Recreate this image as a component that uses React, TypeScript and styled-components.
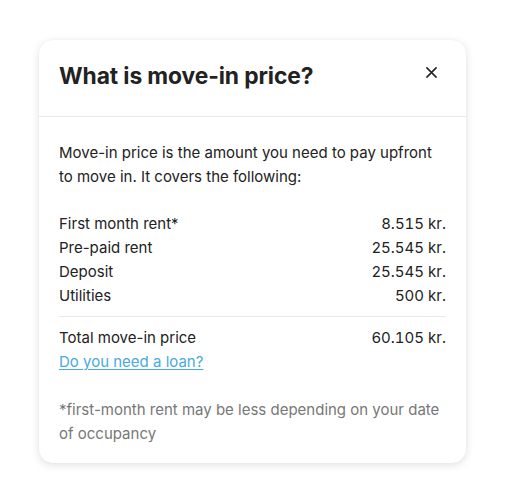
import { type FC } from "react";
import styled, { createGlobalStyle } from "styled-components";

const GlobalStyle = createGlobalStyle`
  html, body {
    margin: 0;
    padding: 0;
    background: #ffffff;
  }
  body {
    font-family: Inter, "Noto Sans", sans-serif;
    color: #222222;
    -webkit-font-smoothing: antialiased;
  }
`;

const Page = styled.div`
  padding: 40px 39px 40px 39px;
  width: 505px;
  box-sizing: border-box;
`;

const Card = styled.div`
  width: 427px;
  background: #ffffff;
  border-radius: 14px;
  box-shadow: 0 2px 8px rgba(0, 0, 0, 0.12), 0 0 1px rgba(0, 0, 0, 0.08);
  overflow: hidden;
`;

const Header = styled.div`
  height: 77px;
  padding: 0 24px 6px 20px;
  display: flex;
  align-items: center;
  justify-content: space-between;
  border-bottom: 1px solid #e8e8e8;
  box-sizing: border-box;
`;

const Title = styled.h2`
  margin: 0;
  font-size: 22.8px;
  font-weight: 700;
  color: #222222;
  letter-spacing: -0.1px;
`;

const CloseButton = styled.button`
  border: none;
  background: none;
  padding: 0;
  width: 24px;
  height: 24px;
  display: flex;
  align-items: center;
  justify-content: center;
  cursor: pointer;
  color: #222222;
  margin: 0 -1px 6px 0;
`;

const Body = styled.div`
  padding: 24px 20px 17px 20px;
  font-size: 15px;
  line-height: 24px;
`;

const Intro = styled.p`
  margin: 0 0 23px 0;
`;

const Rows = styled.div`
  display: flex;
  flex-direction: column;
`;

const Row = styled.div`
  display: flex;
  justify-content: space-between;
`;

const Value = styled.span`
  font-variant-numeric: tabular-nums;
`;

const Divider = styled.hr`
  border: none;
  border-top: 1px solid #e8e8e8;
  margin: 8px 0 9px 0;
`;

const Link = styled.a`
  color: #4aa9e1;
  text-decoration: underline;
  text-underline-offset: 2px;
  cursor: pointer;
`;

const Note = styled.p`
  margin: 24px 0 0 0;
  color: #777777;
`;

const items = [
  { label: "First month rent*", value: "8.515 kr." },
  { label: "Pre-paid rent", value: "25.545 kr." },
  { label: "Deposit", value: "25.545 kr." },
  { label: "Utilities", value: "500 kr." },
];

const App: FC = () => (
  <>
    <GlobalStyle />
    <Page>
      <Card>
        <Header>
          <Title>What is move-in price?</Title>
          <CloseButton aria-label="Close">
            <svg width="11" height="11" viewBox="0 0 12 12">
              <path d="M1 1 L11 11 M11 1 L1 11" stroke="currentColor" strokeWidth="1.7" strokeLinecap="round" />
            </svg>
          </CloseButton>
        </Header>
        <Body>
          <Intro>
            Move-in price is the amount you need to pay upfront to move in. It covers the following:
          </Intro>
          <Rows>
            {items.map((it) => (
              <Row key={it.label}>
                <span>{it.label}</span>
                <Value>{it.value}</Value>
              </Row>
            ))}
          </Rows>
          <Divider />
          <Row>
            <span>Total move-in price</span>
            <Value>60.105 kr.</Value>
          </Row>
          <Link>Do you need a loan?</Link>
          <Note>*first-month rent may be less depending on your date of occupancy</Note>
        </Body>
      </Card>
    </Page>
  </>
);

export default App;
